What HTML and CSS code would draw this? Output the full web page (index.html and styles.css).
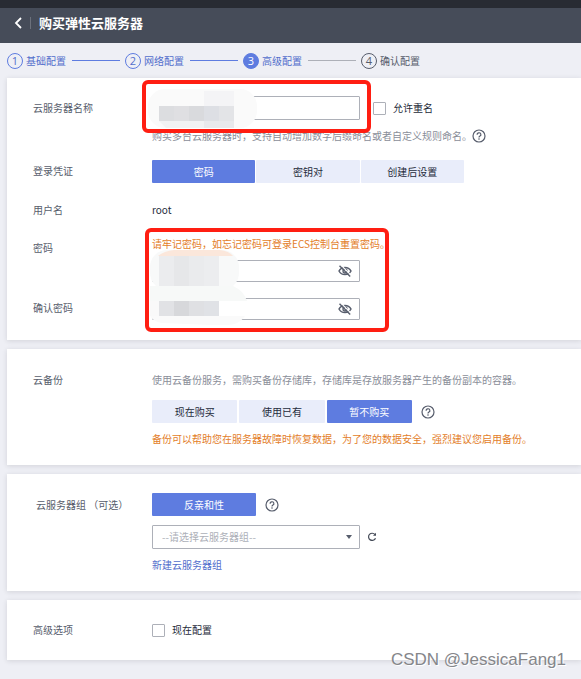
FILE: index.html
```
<!doctype html>
<html lang="zh-CN">
<head>
<meta charset="UTF-8">
<title>购买弹性云服务器</title>
<meta name="viewport" content="width=device-width, initial-scale=1.0">
<link rel="stylesheet" href="styles.css">
</head>

<body>
<svg class="sprite" width="0" height="0">
  <symbol id="help" viewBox="0 0 14 14">
    <circle cx="7" cy="7" r="6" fill="none" stroke="#575d6c" stroke-width="1.2"/>
    <path d="M5.1 5.7a1.9 1.8 0 1 1 2.9 1.4c-.7.4-1 .7-1 1.3" fill="none" stroke="#575d6c" stroke-width="1.2"/>
    <circle cx="7" cy="10" r=".8" fill="#575d6c"/>
  </symbol>
  <symbol id="eye-off" viewBox="0 0 14 12">
    <path d="M1 6C3.600 1.200 10.400 1.200 13 6C10.400 10.800 3.600 10.800 1 6z" fill="none" stroke="#575d6c" stroke-width="1.5"/>
    <circle cx="7" cy="6" r="2" fill="none" stroke="#575d6c" stroke-width="1.3"/>
    <path d="M3 .2L13.200 10.400" stroke="#fff" stroke-width="1.2"/>
    <path d="M1.500 .8L12.200 11.500" stroke="#575d6c" stroke-width="1.400"/>
  </symbol>
</svg>

<div class="topbar"></div>
<header class="header">
  <a class="back" href="#" aria-label="返回"><svg width="8" height="12" viewBox="0 0 8 12"><path d="M7 1L2 6l5 5" fill="none" stroke="#fff" stroke-width="1.8"/></svg></a>
  <h1>购买弹性云服务器</h1>
</header>

<ol class="steps">
  <li class="done"><span class="num">1</span>基础配置</li>
  <li class="done"><span class="num">2</span>网络配置</li>
  <li class="current"><span class="num">3</span>高级配置</li>
  <li><span class="num">4</span>确认配置</li>
</ol>

<main>
  <section class="card card-login">
    <div class="row">
      <label class="label" for="name">云服务器名称</label>
      <div class="control">
        <div class="line">
          <input class="text" id="name" type="text">
          <label class="check"><input type="checkbox">允许重名</label>
        </div>
        <div class="hint">购买多台云服务器时，支持自动增加数字后缀命名或者自定义规则命名。<svg class="help" width="14" height="14"><use href="#help"/></svg></div>
        <svg class="mosaic mosaic-name" width="109" height="39" viewBox="0 0 109 39">
          <rect width="109" height="39" rx="17" fill="#fafafa"/>
          <path d="M56 2h30v15H56z" fill="#f4f4f6"/>
          <path d="M11 17h15v15H11z" fill="#dcdde0"/>
          <path d="M26 17h15v15H26z" fill="#dfdfe2"/>
          <path d="M41 17h15v15H41z" fill="#d9dadd"/>
          <path d="M56 17h15v15H56z" fill="#dddfe4"/>
          <path d="M71 17h15v15H71z" fill="#e3e4e7"/>
          <path d="M11 32h45v7H18z" fill="#f1f2f3"/>
          <path d="M56 32h30v7H56z" fill="#e8e9ec"/>
        </svg>
        <div class="mark mark-name"></div>
      </div>
    </div>

    <div class="row">
      <span class="label">登录凭证</span>
      <div class="control">
        <div class="tabs tabs-login">
          <button class="active" type="button">密码</button>
          <button type="button">密钥对</button>
          <button type="button">创建后设置</button>
        </div>
      </div>
    </div>

    <div class="row">
      <span class="label">用户名</span>
      <div class="control user">root</div>
    </div>

    <div class="passwords">
      <div class="row">
        <label class="label" for="pwd">密码</label>
        <div class="control">
          <p class="warn notice">请牢记密码，如忘记密码可登录ECS控制台重置密码。</p>
          <div class="field">
            <input class="text" id="pwd" type="password">
            <svg class="eye" width="14" height="12"><use href="#eye-off"/></svg>
          </div>
        </div>
      </div>
      <div class="row">
        <label class="label" for="pwd2">确认密码</label>
        <div class="control">
          <div class="field">
            <input class="text" id="pwd2" type="password">
            <svg class="eye" width="14" height="12"><use href="#eye-off"/></svg>
          </div>
        </div>
      </div>
      <svg class="mosaic mosaic-pwd" width="98" height="76" viewBox="0 0 98 76">
        <rect y="1" width="89" height="40" rx="17" fill="#f8f9f9"/>
        <path d="M8 7q6-5 16-6h46q9 1 13 6z" fill="#fbe7db"/>
        <path d="M9 7h15v30H9z" fill="#ebecee"/>
        <path d="M24 7h15v30H24z" fill="#e6e7e9"/>
        <path d="M39 7h15v30H39z" fill="#eaebed"/>
        <path d="M54 7h15v30H54z" fill="#ecedef"/>
        <path d="M0 37h83q11 5 14 15H0z" fill="#f7f9f8"/>
        <path d="M0 52h98v16H0z" fill="#fff"/>
        <path d="M0 52h9v15H0z" fill="#f9f9f9"/>
        <path d="M9 52h15v15H9z" fill="#e1e2e5"/>
        <path d="M24 52h15v15H24z" fill="#d7d8db"/>
        <path d="M39 52h15v15H39z" fill="#dfe0e3"/>
        <path d="M54 52h15v15H54z" fill="#e0e2e6"/>
        <path d="M0 67h95q-6 9-18 9H60L12 74Q4 73 0 67z" fill="#fafafa"/>
      </svg>
      <div class="mark mark-pwd"></div>
    </div>
  </section>

  <section class="card card-backup">
    <div class="row">
      <span class="label">云备份</span>
      <div class="control">
        <p class="hint">使用云备份服务，需购买备份存储库，存储库是存放服务器产生的备份副本的容器。</p>
        <div class="line">
          <div class="tabs tabs-backup">
            <button type="button">现在购买</button>
            <button type="button">使用已有</button>
            <button class="active" type="button">暂不购买</button>
          </div>
          <svg class="help" width="14" height="14"><use href="#help"/></svg>
        </div>
        <p class="warn">备份可以帮助您在服务器故障时恢复数据，为了您的数据安全，强烈建议您启用备份。</p>
      </div>
    </div>
  </section>

  <section class="card card-group">
    <div class="row">
      <label class="label label-optional" for="group">云服务器组 （可选）</label>
      <div class="control">
        <div class="line">
          <div class="tabs"><button class="active" type="button">反亲和性</button></div>
          <svg class="help" width="14" height="14"><use href="#help"/></svg>
        </div>
        <div class="line line-select">
          <div class="field">
            <select class="text" id="group"><option>--请选择云服务器组--</option></select>
            <svg class="caret" width="6" height="4" viewBox="0 0 6 4"><path d="M0 0h6L3 4z" fill="#575d6c"/></svg>
          </div>
          <button class="refresh" type="button" aria-label="刷新"><svg width="10" height="10" viewBox="0 0 10 10"><path d="M8 2.600A3.600 3.600 0 1 0 8.500 6.200" fill="none" stroke="#464c59" stroke-width="1.200"/><path d="M9 .8v3H6z" fill="#464c59"/></svg></button>
        </div>
        <a class="link" href="#">新建云服务器组</a>
      </div>
    </div>
  </section>

  <section class="card card-advanced">
    <div class="row">
      <span class="label">高级选项</span>
      <div class="control">
        <label class="check"><input type="checkbox">现在配置</label>
      </div>
    </div>
  </section>
</main>

<div class="watermark">CSDN @JessicaFang1</div>
</body>
</html>
```

FILE: styles.css
```
* {
  box-sizing: border-box;
}

body {
  position: relative;
  margin: 0;
  min-height: 100vh;
  background: #eeeff5;
  color: #252b3a;
  font: 10px/18px "Noto Sans CJK SC", sans-serif;
}

button, input, select {
  margin: 0;
  padding: 0;
  border: 0;
  font: inherit;
  color: inherit;
}

p {
  margin: 0;
}

svg {
  display: block;
  flex: none;
}

a {
  color: #526ecc;
  text-decoration: none;
}

.sprite {
  position: absolute;
}

/* Header */
.topbar {
  height: 8px;
  background: #282b33;
}

.header {
  display: flex;
  align-items: center;
  height: 35px;
  padding-left: 14px;
  padding-bottom: 5px;
  background: #464c59;
}

.back {
  padding-right: 8px;
  border-right: 1px solid #6c717c;
}

.header h1 {
  margin: 0 0 0 8px;
  color: #fff;
  font-size: 13px;
  line-height: 20px;
}

/* Steps */
.steps {
  display: flex;
  gap: 5px;
  height: 35px;
  margin: 0;
  padding: 0 0 0 7px;
  align-items: center;
  list-style: none;
  color: #575d6c;
}

.steps li {
  display: flex;
  align-items: center;
  gap: 3px;
  white-space: nowrap;
}

.steps li:not(:last-child):after {
  content: "";
  width: 48px;
  height: 1px;
  margin-left: 3px;
  background: #5e7ce0;
}

.steps .current:after {
  background: #adb0b8 !important;
}

.num {
  width: 16px;
  height: 16px;
  border: 1px solid #575d6c;
  border-radius: 50%;
  font-family: "Open Sans", sans-serif;
  font-size: 11px;
  line-height: 14px;
  text-align: center;
}

.done, .current {
  color: #526ecc;
}

.done .num {
  border-color: #5e7ce0;
}

.current .num {
  border-color: #5e7ce0;
  background: #5e7ce0;
  color: #fff;
}

/* Cards */
main {
  display: flex;
  flex-direction: column;
  gap: 9px;
  padding-left: 7px;
}

.card {
  display: flex;
  flex-direction: column;
  gap: 16px;
  padding-left: 26px;
  background: #fff;
  box-shadow: 0 1px 5px rgba(40, 43, 51, .14);
}

.card-login {
  padding-top: 18px;
  padding-bottom: 20px;
}

.card-backup {
  padding-top: 22px;
  padding-bottom: 17px;
}

.card-group {
  padding-top: 19px;
  padding-bottom: 17px;
}

.card-advanced {
  padding-top: 21px;
  padding-bottom: 21px;
}

.row {
  display: flex;
}

.label {
  flex: none;
  width: 119px;
  line-height: 23px;
  color: #575d6c;
}

.label-optional {
  padding-left: 3px;
}

.control {
  position: relative;
  flex: 1;
  white-space: nowrap;
}

.line {
  display: flex;
  align-items: center;
}

.text {
  display: block;
  width: 208px;
  height: 24px;
  padding: 0 9px;
  border: 1px solid #adb0b8;
  border-radius: 1px;
  background: #fff;
}

.hint {
  display: flex;
  align-items: center;
  color: #8a8e99;
}

.warn {
  color: #e37d29;
}

.user {
  line-height: 21px;
}

.card-login .label {
  line-height: 21px;
}

.card-login > .row:first-child .label {
  line-height: 23px;
}

.card-login .hint {
  margin-top: 7px;
  height: 17px;
}

.check {
  display: inline-flex;
  align-items: center;
  gap: 7px;
}

.check input {
  appearance: none;
  width: 13px;
  height: 13px;
  border: 1px solid #adb0b8;
  border-radius: 1px;
  background: #fff;
}

.line .check {
  margin-left: 13px;
}

.tabs {
  display: flex;
  gap: 1px;
}

.tabs button {
  width: 104px;
  height: 23px;
  border-radius: 1px;
  background: #e9edfa;
}

.tabs .active {
  background: #5e7ce0;
  color: #fff;
}

.tabs-login {
  width: 312px;
}

.tabs-backup {
  gap: 2px;
  width: 260px;
}

.line .help {
  margin-left: 9px;
}

/* Passwords */
.passwords {
  position: relative;
  display: flex;
  flex-direction: column;
  gap: 16px;
  padding-top: 2px;
}

.passwords .text {
  height: 22px;
}

.card-login .passwords .label {
  line-height: 20px;
}

.notice {
  margin-bottom: 10px;
  line-height: 12px;
}

.field {
  position: relative;
  width: 208px;
}

.eye {
  position: absolute;
  top: 5px;
  right: 8px;
}

/* Overlays on the private values */
.mosaic {
  position: absolute;
}

.mosaic-name {
  top: -7px;
  left: -4px;
}

.mosaic-pwd {
  top: 13px;
  left: 117px;
}

.mark {
  position: absolute;
  border: 4px solid #ff1e12;
  border-radius: 6px;
  pointer-events: none;
}

.mark-name {
  top: -16px;
  left: -10px;
  width: 229px;
  height: 53px;
}

.mark-pwd {
  top: -8px;
  left: 112px;
  width: 244px;
  height: 104px;
}

/* Backup */
.card-backup .label {
  line-height: 18px;
}

.card-backup .hint {
  margin-bottom: 11px;
}

.card-backup .warn {
  margin-top: 7px;
}

/* Server group */
.line-select {
  margin: 9px 0 7px;
}

select.text {
  appearance: none;
  color: #adb0b8;
}

.caret {
  position: absolute;
  top: 10px;
  right: 8px;
}

.refresh {
  margin-left: 7px;
  background: none;
}

.link {
  display: block;
}

.card-advanced .label {
  line-height: 18px;
}

.card-advanced .check {
  display: flex;
}

.watermark {
  position: absolute;
  right: 15px;
  bottom: 8px;
  color: #85868a;
  font: 17px/22px "Liberation Sans", sans-serif;
  text-shadow: 1px 1px 0 #fff;
}
```
